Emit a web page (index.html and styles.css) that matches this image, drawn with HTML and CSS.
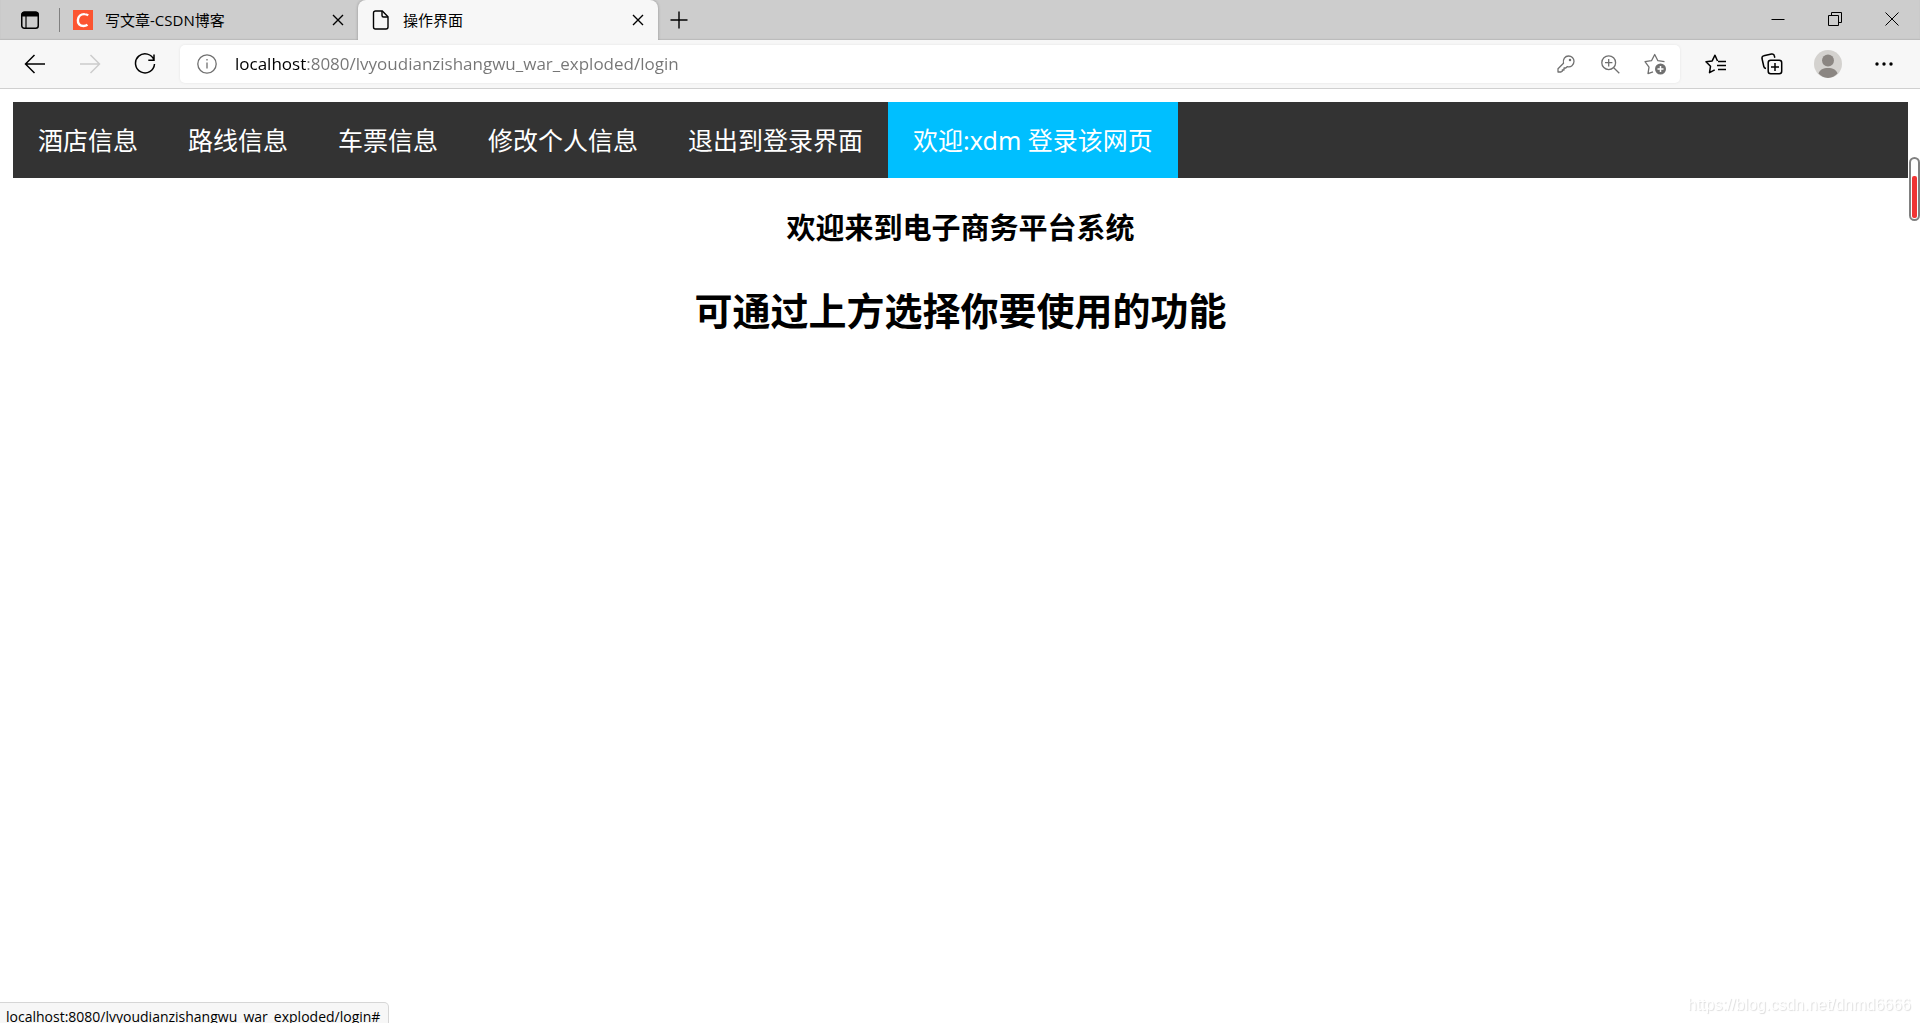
FILE: index.html
```html
<!DOCTYPE html>
<html lang="zh-CN">
<head>
    <meta charset="UTF-8">
    <meta name="viewport" content="width=device-width, initial-scale=1.0">
    <title>操作界面</title>
    <link rel="stylesheet" href="styles.css">
</head>
<body>
    <header class="browser">
        <div class="tab-strip">
            <button class="tab-menu" aria-label="标签页操作菜单">
                <svg width="20" height="20" viewBox="0 0 20 20"><rect x="1.75" y="2.25" width="16.5" height="16" rx="2.5" fill="none" stroke="#000" stroke-width="1.5"/><path d="M1.5 6.5V4.5a3 3 0 0 1 3-3h11a3 3 0 0 1 3 3v2z"/><path d="M6 6v12" stroke="#000" stroke-width="1.2"/></svg>
            </button>
            <div class="tab">
                <svg class="favicon" width="20" height="20" viewBox="0 0 20 20"><rect width="20" height="20" fill="#fc5531"/><path d="M15.2 5.4A6 6 0 0 0 11.6 4.1C7.8 3.9 5.2 6.5 4.9 10c-.3 3.6 2 6 5.6 6a7 7 0 0 0 4-1.2" fill="none" stroke="#fff" stroke-width="2.4"/></svg>
                <a class="tab-title" href="#">写文章-CSDN博客</a>
                <button class="tab-close" aria-label="关闭"><svg width="12" height="12" viewBox="0 0 12 12"><path d="M1 1l10 10M11 1L1 11"/></svg></button>
            </div>
            <div class="tab tab-active">
                <svg class="favicon" width="20" height="20" viewBox="0 0 20 20" fill="none" stroke="#000" stroke-width="1.4"><path d="M4.5 1h6.8L17 6.7V17a2 2 0 0 1-2 2H4.5a2 2 0 0 1-2-2V3a2 2 0 0 1 2-2z"/><path d="M11 1v4.5A1.5 1.5 0 0 0 12.5 7H17"/></svg>
                <a class="tab-title" href="#">操作界面</a>
                <button class="tab-close" aria-label="关闭"><svg width="12" height="12" viewBox="0 0 12 12"><path d="M1 1l10 10M11 1L1 11"/></svg></button>
            </div>
            <button class="new-tab" aria-label="新建标签页"><svg width="18" height="18" viewBox="0 0 18 18"><path d="M9 .5v17M.5 9h17"/></svg></button>
            <div class="window-btns">
                <button aria-label="最小化"><svg width="14" height="14" viewBox="0 0 14 14"><path d="M.5 7.5h13"/></svg></button>
                <button aria-label="还原"><svg width="14" height="14" viewBox="0 0 14 14"><path d="M.5 3.5h10v10H.5zM3.5 3V.5h10v10H11"/></svg></button>
                <button aria-label="关闭窗口"><svg width="14" height="14" viewBox="0 0 14 14"><path d="M.5.5l13 13M13.5.5l-13 13"/></svg></button>
            </div>
        </div>

        <div class="toolbar">
            <button class="nav-btn" aria-label="后退"><svg width="22" height="20" viewBox="0 0 22 20"><path d="M21 10H1.5M10.5 1l-9 9 9 9"/></svg></button>
            <button class="nav-btn" aria-label="前进" disabled><svg width="22" height="20" viewBox="0 0 22 20"><path d="M1 10h19.5M11.5 1l9 9-9 9"/></svg></button>
            <button class="nav-btn" aria-label="刷新"><svg width="22" height="22" viewBox="0 0 22 22"><path d="M20 7.2A9.5 9.5 0 1 0 20.500 11M20 1.500v5.700h-5.700"/></svg></button>
            <form class="address">
                <svg width="20" height="20" viewBox="0 0 20 20"><circle cx="10" cy="10" r="9.2"/><path d="M10 8.5v6M10 5v1.6"/></svg>
                <input type="text" aria-label="地址" value="localhost:8080/lvyoudianzishangwu_war_exploded/login">
                <button type="button" aria-label="密码"><svg width="18" height="18" viewBox="0 0 18 18"><path d="M6.5 8.3C5.6 4.3 8 1 11.6 1c3 0 5.4 2.3 5.4 5.3 0 3.8-3.2 6.2-6.6 5.3L8.8 13H7v2H5.3v1.2L4 17H1v-3.2z" stroke-linejoin="round"/><circle cx="13" cy="5" r=".6"/></svg></button>
                <button type="button" aria-label="缩放"><svg width="19" height="19" viewBox="0 0 19 19"><circle cx="7.7" cy="7.7" r="6.9"/><path d="M12.7 12.7l5.6 5.6M7.7 4v7.4M4 7.7h7.4"/></svg></button>
                <button type="button" aria-label="添加到收藏夹"><svg width="24" height="22" viewBox="0 0 24 22"><path d="M9 18.800l-5 1.800 1-6.500L1 8.700l6.500-1L10.700 1.500l3.200 6.200 6.600 1" stroke-linejoin="round"/><circle cx="16.5" cy="16" r="5.5" fill="#707070" stroke="none"/><path d="M16.500 13v6M13.500 16h6" stroke="#fff" stroke-width="1.5"/></svg></button>
            </form>
            <button class="tool-btn" aria-label="收藏夹"><svg width="22" height="20" viewBox="0 0 22 20"><path d="M12.500 7L10 1.200 7.200 6.900l-6.200.900 4.500 4.500-1 6.400 5.200-2.800M13 7.500h8M12 11.500h9M13 15.500h8" stroke-linejoin="round"/></svg></button>
            <button class="tool-btn" aria-label="集锦"><svg width="22" height="22" viewBox="0 0 22 22"><rect x="7.2" y="7.2" width="13.5" height="13.5" rx="2.5"/><path d="M14 10v8M10 14h8M5 15.500c-1.300-.2-2-1-2.200-2L1 5.500C.8 4 1.500 3 2.800 2.800L10.500 1c1.500-.3 2.600.5 2.800 1.700l.5 2"/></svg></button>
            <button class="tool-btn avatar" aria-label="用户"><svg width="28" height="28" viewBox="0 0 28 28"><circle cx="14" cy="14" r="14" fill="#d4d2cf"/><circle cx="14" cy="10.5" r="6" fill="#8b8682"/><path d="M4.5 23.5C6 19.5 9 18 14 18s8 1.5 9.5 5.5A14 14 0 0 1 14 28a14 14 0 0 1-9.500-4.500z" fill="#8b8682"/></svg></button>
            <button class="tool-btn more" aria-label="更多"><svg width="18" height="4" viewBox="0 0 18 4"><circle cx="2" cy="2" r="1.7"/><circle cx="9" cy="2" r="1.7"/><circle cx="16" cy="2" r="1.7"/></svg></button>
        </div>
    </header>

    <main>
        <ul class="menu">
            <li><a href="#">酒店信息</a></li>
            <li><a href="#">路线信息</a></li>
            <li><a href="#">车票信息</a></li>
            <li><a href="#">修改个人信息</a></li>
            <li><a href="#">退出到登录界面</a></li>
            <li><a class="active" href="#">欢迎:xdm 登录该网页</a></li>
        </ul>
        <h3>欢迎来到电子商务平台系统</h3>
        <h2>可通过上方选择你要使用的功能</h2>
    </main>

    <div class="meter"><div class="meter-fill"></div></div>
    <div class="status">localhost:8080/lvyoudianzishangwu_war_exploded/login#</div>
    <div class="watermark">https://blog.csdn.net/dnmd6666</div>
</body>
</html>
```
FILE: styles.css
```css
* {
    margin: 0;
    padding: 0;
    box-sizing: border-box;
}
body {
    min-height: 100vh;
    background: #fff;
    color: #000;
    font-family: "Noto Sans", "Noto Sans CJK SC", sans-serif;
    overflow: hidden;
}
button {
    display: flex;
    align-items: center;
    justify-content: center;
    border: none;
    background: none;
    cursor: pointer;
}
button svg {
    fill: none;
    stroke: #000;
}
a {
    color: inherit;
    text-decoration: none;
}

/* tabs */
.tab-strip {
    display: flex;
    height: 40px;
    background: #cdcdcd;
    box-shadow: inset 0 -1px 1px #bbb;
}
.tab-menu {
    width: 60px;
    margin: 8px 0;
    border-right: 1px solid #808080;
}
.tab-menu svg {
    fill: #000;
    stroke: none;
}
.tab {
    display: flex;
    align-items: center;
    width: 298px;
    padding: 0 12px 0 13px;
    font-family: "Open Sans", "Noto Sans CJK SC", sans-serif;
    font-size: 15px;
}
.tab-active {
    width: 300px;
    background: #f7f7f7;
    border-radius: 8px 8px 0 0;
    box-shadow: 0 0 3px rgba(0, 0, 0, 0.3);
    clip-path: inset(0 -4px 0 -4px);
}
.tab-title {
    flex: 1;
    margin-left: 12px;
    line-height: 20px;
}
.tab-close {
    width: 16px;
    height: 16px;
}
.new-tab {
    width: 42px;
}
.tab-close svg,
.new-tab svg {
    stroke-width: 1.4;
}
.window-btns {
    display: flex;
    height: 37px;
    margin-left: auto;
}
.window-btns button {
    width: 57px;
}

/* toolbar */
.toolbar {
    display: flex;
    align-items: center;
    height: 49px;
    padding: 0 8px 0 7px;
    background: #f7f7f7;
    border-bottom: 1px solid #d0d0d0;
}
.nav-btn {
    width: 55px;
    height: 40px;
}
.nav-btn svg,
.tool-btn svg {
    stroke-width: 1.5;
}
.nav-btn:disabled svg {
    stroke: #ccc;
}
.address {
    flex: 1;
    display: flex;
    align-items: center;
    height: 38px;
    margin: 0 8px;
    padding: 0 2px 0 17px;
    background: #fff;
    border-radius: 5px;
    box-shadow: 0 0 3px rgba(0, 0, 0, 0.08);
}
.address svg {
    fill: none;
    stroke: #707070;
    stroke-width: 1.3;
}
/* host part is black, the rest of the url is grey */
.address input {
    flex: 1;
    height: 30px;
    margin-left: 18px;
    padding-bottom: 2px;
    border: none;
    outline: none;
    font-family: "Open Sans", sans-serif;
    font-size: 17px;
    color: transparent;
    background: linear-gradient(to right, #000 72px, #757575 72px);
    -webkit-background-clip: text;
    background-clip: text;
}
.address button {
    width: 45px;
    height: 36px;
}
.tool-btn {
    width: 56px;
    height: 40px;
}
.avatar svg {
    stroke: none;
}
.more svg {
    fill: #000;
    stroke: none;
}

/* page */
main {
    padding: 13px 12px 0 13px;
    text-align: center;
}
.menu {
    display: flex;
    list-style: none;
    background: #333;
}
.menu a {
    display: block;
    padding: 18px 25px;
    color: #fff;
    font-size: 25px;
    line-height: 40px;
}
.menu .active {
    background: #00bfff;
}
h3 {
    margin-top: 30px;
    font-size: 29px;
    line-height: 40px;
}
h2 {
    margin-top: 37px;
    font-size: 38px;
    line-height: 50px;
}

.meter {
    position: fixed;
    top: 157px;
    right: 0;
    display: flex;
    align-items: flex-end;
    width: 11px;
    height: 64px;
    padding: 1px;
    border: 2px solid #808080;
    border-radius: 6px;
    background: #fff;
}
.meter-fill {
    width: 100%;
    height: 42px;
    border-radius: 2px;
    background: #f03434;
}
.status {
    position: fixed;
    left: 0;
    bottom: -8px;
    padding: 0 8px 0 6px;
    border: 1px solid #d6d6d6;
    border-left: none;
    border-radius: 0 5px 0 0;
    background: #f7f7f7;
    font-family: "Open Sans", sans-serif;
    font-size: 14px;
    line-height: 27px;
}
.watermark {
    position: fixed;
    right: 9px;
    bottom: 8px;
    color: #fff;
    font-family: "Liberation Sans", sans-serif;
    font-size: 16px;
    line-height: 20px;
    text-shadow: 1px 1px 1px #ddd;
}
```
